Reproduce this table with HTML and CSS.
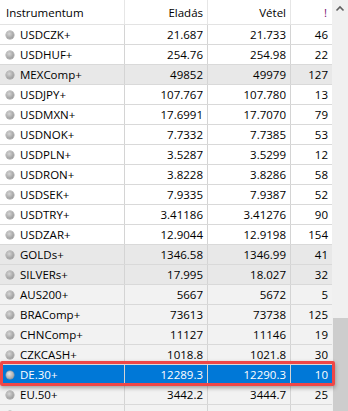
FILE: index.html
```html
<!DOCTYPE html>
<html>
<head>
<meta charset="utf-8">
<link rel="stylesheet" href="styles.css">
</head>
<body>
<div class="window">
  <div class="table">
    <div class="row head">
      <div class="cell name-h">Instrumentum</div>
      <div class="cell num">Eladás</div>
      <div class="cell num">Vétel</div>
      <div class="cell num bang">!</div>
    </div>
    <div class="row"><div class="cell name"><span class="dot"></span>USDCZK+</div><div class="cell num">21.687</div><div class="cell num">21.733</div><div class="cell num">46</div></div>
    <div class="row"><div class="cell name"><span class="dot"></span>USDHUF+</div><div class="cell num">254.76</div><div class="cell num">254.98</div><div class="cell num">22</div></div>
    <div class="row shade"><div class="cell name"><span class="dot"></span>MEXComp+</div><div class="cell num">49852</div><div class="cell num">49979</div><div class="cell num">127</div></div>
    <div class="row"><div class="cell name"><span class="dot"></span>USDJPY+</div><div class="cell num">107.767</div><div class="cell num">107.780</div><div class="cell num">13</div></div>
    <div class="row"><div class="cell name"><span class="dot"></span>USDMXN+</div><div class="cell num">17.6991</div><div class="cell num">17.7070</div><div class="cell num">79</div></div>
    <div class="row"><div class="cell name"><span class="dot"></span>USDNOK+</div><div class="cell num">7.7332</div><div class="cell num">7.7385</div><div class="cell num">53</div></div>
    <div class="row"><div class="cell name"><span class="dot"></span>USDPLN+</div><div class="cell num">3.5287</div><div class="cell num">3.5299</div><div class="cell num">12</div></div>
    <div class="row"><div class="cell name"><span class="dot"></span>USDRON+</div><div class="cell num">3.8228</div><div class="cell num">3.8286</div><div class="cell num">58</div></div>
    <div class="row"><div class="cell name"><span class="dot"></span>USDSEK+</div><div class="cell num">7.9335</div><div class="cell num">7.9387</div><div class="cell num">52</div></div>
    <div class="row"><div class="cell name"><span class="dot"></span>USDTRY+</div><div class="cell num">3.41186</div><div class="cell num">3.41276</div><div class="cell num">90</div></div>
    <div class="row"><div class="cell name"><span class="dot"></span>USDZAR+</div><div class="cell num">12.9044</div><div class="cell num">12.9198</div><div class="cell num">154</div></div>
    <div class="row shade"><div class="cell name"><span class="dot"></span>GOLDs+</div><div class="cell num">1346.58</div><div class="cell num">1346.99</div><div class="cell num">41</div></div>
    <div class="row shade"><div class="cell name"><span class="dot"></span>SILVERs+</div><div class="cell num">17.995</div><div class="cell num">18.027</div><div class="cell num">32</div></div>
    <div class="row light"><div class="cell name"><span class="dot"></span>AUS200+</div><div class="cell num">5667</div><div class="cell num">5672</div><div class="cell num">5</div></div>
    <div class="row light"><div class="cell name"><span class="dot"></span>BRAComp+</div><div class="cell num">73613</div><div class="cell num">73738</div><div class="cell num">125</div></div>
    <div class="row light"><div class="cell name"><span class="dot"></span>CHNComp+</div><div class="cell num">11127</div><div class="cell num">11146</div><div class="cell num">19</div></div>
    <div class="row light"><div class="cell name"><span class="dot"></span>CZKCASH+</div><div class="cell num">1018.8</div><div class="cell num">1021.8</div><div class="cell num">30</div></div>
    <div class="row selected"><div class="cell name"><span class="dot"></span>DE.30+</div><div class="cell num">12289.3</div><div class="cell num">12290.3</div><div class="cell num">10</div><div class="mark"></div></div>
    <div class="row light"><div class="cell name"><span class="dot"></span>EU.50+</div><div class="cell num">3442.2</div><div class="cell num">3444.7</div><div class="cell num">25</div></div>
    <div class="row light"><div class="cell name"><span class="dot"></span>FRA.40</div><div class="cell num">5187.7</div><div class="cell num">5190.2</div><div class="cell num">16</div></div>
  </div>
  <div class="scrollbar">
    <div class="arrow"><svg width="16" height="17" viewBox="0 0 16 17"><path d="M4.5 10.5 L8 7 L11.5 10.5" fill="none" stroke="#606060" stroke-width="1.6"/></svg></div>
    <div class="track"><div class="thumb"></div></div>
  </div>
</div>
</body>
</html>
```
FILE: styles.css
```css
* { box-sizing: border-box; }
html, body { margin: 0; padding: 0; background: #fff; }
body { font-family: "Open Sans", "Segoe UI", sans-serif; font-size: 11.5px; color: #000; overflow: hidden; }
.window { display: flex; width: 348px; height: 411px; overflow: hidden; }
.table { width: 332px; flex: none; }
.row {
  position: relative;
  display: grid;
  grid-template-columns: 125px 83px 83px 41px;
  height: 20px;
  border-bottom: 1px solid #d9d9d9;
  background: #fff;
}
.row.head { height: 25px; border-bottom: 1px solid #e3e3e3; }
.row.shade { background: #e8e8e8; }
.row.light { background: #f2f2f2; }
.row.selected { background: #0078d7; color: #fff; }
.cell {
  display: flex;
  align-items: center;
  border-right: 1px solid #d4d4d4;
  white-space: nowrap;
  overflow: hidden;
}
.cell:nth-child(4) { border-right: none; }
.head .cell { border-right-color: #e6e6e6; }
.name-h { padding-left: 6px; }
.name { padding-left: 6px; }
.num { justify-content: flex-end; padding-right: 4px; }
.head .num:last-child { padding-right: 5px; }
.bang { color: #7b1a73; }
.dot {
  width: 8px;
  height: 8px;
  border-radius: 50%;
  margin-right: 6px;
  flex: none;
  background: radial-gradient(circle at 40% 35%, #d6d6d6 0%, #a9a9a9 55%, #8c8c8c 100%);
  box-shadow: 0 0 0 0.5px #9a9a9a;
}
.selected .dot { background: radial-gradient(circle at 40% 35%, #e4e4e4 0%, #b4b4b4 55%, #909090 100%); }
.mark {
  position: absolute;
  left: 0;
  top: -4px;
  width: 335px;
  height: 25px;
  border: 3px solid #ef4747;
  border-radius: 2px;
  box-shadow: 0 2px 4px rgba(0,0,0,0.35);
  pointer-events: none;
  z-index: 2;
}
.scrollbar { width: 16px; flex: none; background: #f0f0f0; display: flex; flex-direction: column; }
.arrow { height: 17px; }
.arrow svg { display: block; }
.track { flex: 1; padding-top: 301px; padding-left: 1px; }
.thumb { width: 15px; height: 100px; background: #cdcdcd; }
```
